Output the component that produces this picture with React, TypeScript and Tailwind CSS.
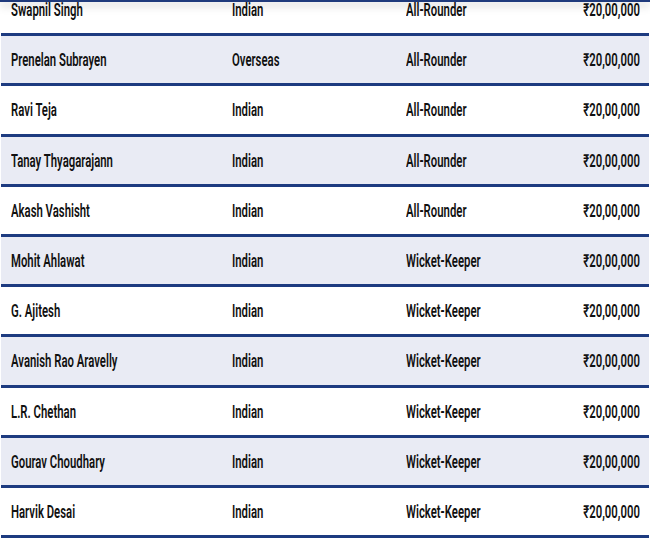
import React from 'react';

const players = [
  { name: 'Swapnil Singh', type: 'Indian', role: 'All-Rounder', price: '₹20,00,000' },
  { name: 'Prenelan Subrayen', type: 'Overseas', role: 'All-Rounder', price: '₹20,00,000' },
  { name: 'Ravi Teja', type: 'Indian', role: 'All-Rounder', price: '₹20,00,000' },
  { name: 'Tanay Thyagarajann', type: 'Indian', role: 'All-Rounder', price: '₹20,00,000' },
  { name: 'Akash Vashisht', type: 'Indian', role: 'All-Rounder', price: '₹20,00,000' },
  { name: 'Mohit Ahlawat', type: 'Indian', role: 'Wicket-Keeper', price: '₹20,00,000' },
  { name: 'G. Ajitesh', type: 'Indian', role: 'Wicket-Keeper', price: '₹20,00,000' },
  { name: 'Avanish Rao Aravelly', type: 'Indian', role: 'Wicket-Keeper', price: '₹20,00,000' },
  { name: 'L.R. Chethan', type: 'Indian', role: 'Wicket-Keeper', price: '₹20,00,000' },
  { name: 'Gourav Choudhary', type: 'Indian', role: 'Wicket-Keeper', price: '₹20,00,000' },
  { name: 'Harvik Desai', type: 'Indian', role: 'Wicket-Keeper', price: '₹20,00,000' },
];

function Cell({ text, right }: { text: string; right?: boolean }) {
  return (
    <span
      className={
        'inline-block whitespace-nowrap scale-x-[0.63] ' + (right ? 'origin-right' : 'origin-left')
      }
    >
      {text}
    </span>
  );
}

export default function App() {
  return (
    <div
      className="relative w-[650px] h-[540px] overflow-hidden bg-white text-[#111111] font-semibold text-[18px]"
      style={{ fontFamily: 'Roboto, "Liberation Sans", sans-serif' }}
    >
      {/* header edge with its shadow */}
      <div className="absolute top-0 left-0 right-0 h-[2px] bg-[#1f3a7c] shadow-[0_3px_9px_rgba(0,0,0,0.35)] z-10" />

      <div className="-mt-[14px] px-[1px]">
        {players.map((p, i) => (
          <div
            key={p.name}
            className={
              'flex items-center h-[50.2px] border-b-[3px] border-[#1d3b80] ' +
              (i % 2 === 1 ? 'bg-[#e9ebf4]' : 'bg-white')
            }
          >
            <div className="w-[220px] pl-[10px]">
              <Cell text={p.name} />
            </div>
            <div className="w-[175px] pl-[11px]">
              <Cell text={p.type} />
            </div>
            <div className="w-[150px] pl-[10px]">
              <Cell text={p.role} />
            </div>
            <div className="flex-1 pr-[9px] text-right">
              <Cell text={p.price} right />
            </div>
          </div>
        ))}
      </div>
    </div>
  );
}
